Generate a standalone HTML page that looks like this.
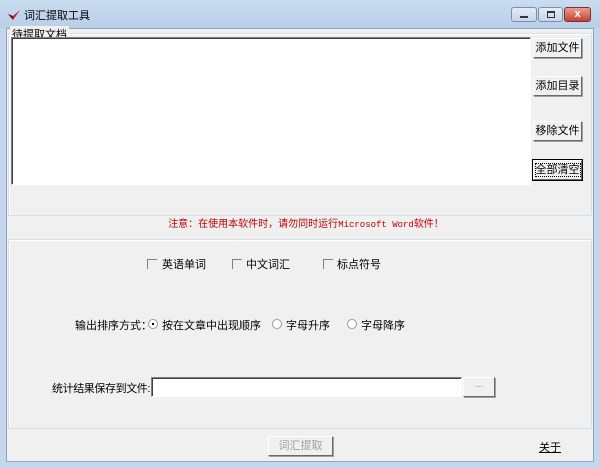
<!DOCTYPE html><html><head><meta charset="utf-8"><style>
*{margin:0;padding:0;box-sizing:border-box}
body{width:600px;height:468px;overflow:hidden;background:#c4d7ec;font:11px "Liberation Sans","Noto Sans CJK SC",sans-serif;color:#000;position:relative;white-space:nowrap}
.a{position:absolute}
.client{left:6px;top:28px;width:588px;height:434px;background:#f0f0f0;border:1px solid #8fa6c0}
.btn{position:absolute;background:#f0f0f0;border:1px solid;border-color:#fff #696969 #696969 #fff;box-shadow:1px 1px 0 #a0a0a0;text-align:center;font-size:11px;line-height:18px;overflow:hidden}
.grp{position:absolute;border:1px solid #d5dfe5;box-shadow:inset 1px 1px 0 #fff}
.cb{position:absolute;width:10px;height:10px;border-left:1px solid #808080;border-top:1px solid #808080}
.rd{position:absolute;width:10px;height:10px;border-radius:50%;border:1px solid #9a9a9a;background:#fff}
</style></head><body>
<div class="a" style="left:0;top:0;width:600px;height:28px;background:linear-gradient(#c9dcf0,#b8cfe8)"></div>
<svg class="a" style="left:7px;top:8px" width="14" height="14" viewBox="0 0 14 14"><path d="M1 6 L6 12 L13 2 L6 8 Z" fill="#c02020"/><path d="M1 6 L6 12 L6 8Z" fill="#801010"/></svg>
<div class="a" style="left:24px;top:7px;font-size:11px">词汇提取工具</div>
<div class="a" style="left:511px;top:7px;width:26px;height:15px;border:1px solid #7a8fa8;border-radius:3px;background:linear-gradient(#e3ecf7,#c5d6ea)"><div class="a" style="left:8px;top:8px;width:8px;height:2px;background:#333"></div></div>
<div class="a" style="left:538px;top:7px;width:25px;height:15px;border:1px solid #7a8fa8;border-radius:3px;background:linear-gradient(#e3ecf7,#c5d6ea)"><div class="a" style="left:8px;top:3px;width:8px;height:7px;border:1px solid #333;border-top-width:2px"></div></div>
<div class="a" style="left:564px;top:7px;width:27px;height:15px;border:1px solid #7a3030;border-radius:3px;background:linear-gradient(#e8a090,#c84030);color:#fff;font-weight:bold;text-align:center;line-height:13px;font-size:11px">x</div>
<div class="a client"></div>
<div class="grp" style="left:8px;top:33px;width:584px;height:183px"></div>
<div class="a" style="left:10px;top:26px;background:#f0f0f0;padding:0 2px">待提取文档</div>
<div class="a" style="left:11px;top:37px;width:520px;height:148px;background:#fff;border:1px solid;border-color:#808080 #fff #fff #808080;box-shadow:inset 1px 1px 0 #404040"></div>
<div class="btn" style="left:533px;top:38px;width:49px;height:20px">添加文件</div>
<div class="btn" style="left:533px;top:76px;width:49px;height:20px">添加目录</div>
<div class="btn" style="left:533px;top:121px;width:49px;height:20px">移除文件</div>
<div class="btn" style="left:533px;top:160px;width:49px;height:20px;outline:1px solid #000"><span style="outline:1px dotted #000">全部清空</span></div>
<div class="a" style="left:0;width:600px;top:215px;text-align:center;color:#c00000;font-size:10px;padding-left:12px">注意：在使用本软件时，请勿同时运行<span style="font-family:'Liberation Mono';font-size:9px">Microsoft Word</span>软件！</div>
<div class="grp" style="left:8px;top:239px;width:584px;height:190px"></div>
<div class="cb" style="left:147px;top:259px"></div><div class="a" style="left:162px;top:256px">英语单词</div>
<div class="cb" style="left:232px;top:259px"></div><div class="a" style="left:246px;top:256px">中文词汇</div>
<div class="cb" style="left:323px;top:259px"></div><div class="a" style="left:337px;top:256px">标点符号</div>
<div class="a" style="left:75px;top:317px">输出排序方式：</div>
<div class="rd" style="left:148px;top:319px"><div class="a" style="left:3px;top:3px;width:2px;height:2px;background:#000"></div></div><div class="a" style="left:162px;top:317px">按在文章中出现顺序</div>
<div class="rd" style="left:272px;top:319px"></div><div class="a" style="left:286px;top:317px">字母升序</div>
<div class="rd" style="left:347px;top:319px"></div><div class="a" style="left:361px;top:317px">字母降序</div>
<div class="a" style="left:52px;top:380px;letter-spacing:-0.4px">统计结果保存到文件:</div>
<div class="a" style="left:151px;top:377px;width:311px;height:20px;background:#fff;border:1px solid;border-color:#808080 #fff #fff #808080;box-shadow:inset 1px 1px 0 #404040"></div>
<div class="btn" style="left:463px;top:377px;width:32px;height:20px;color:#888;font-size:10px;line-height:14px">...</div>
<div class="btn" style="left:268px;top:436px;width:65px;height:20px;color:#a0a0a0">词汇提取</div>
<div class="a" style="left:539px;top:439px;text-decoration:underline">关于</div>
</body></html>
